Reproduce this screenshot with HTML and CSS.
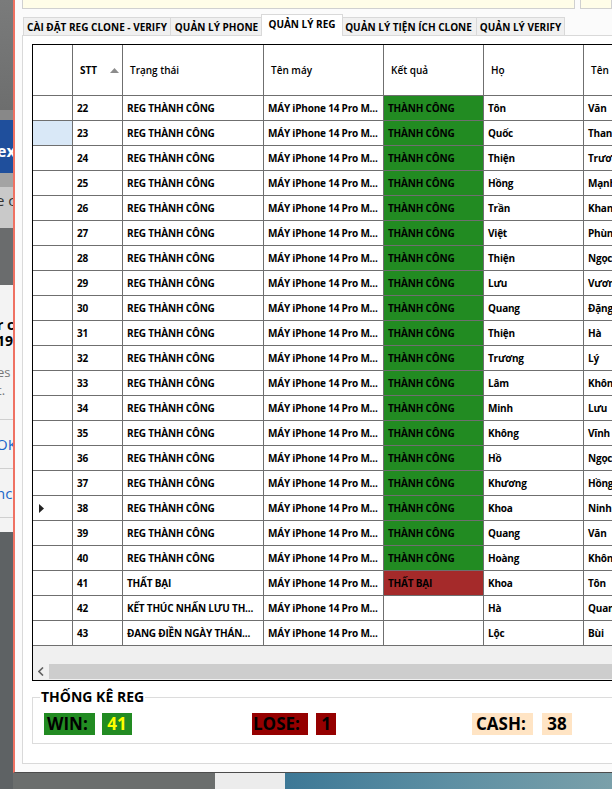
FILE: index.html
```html
<!DOCTYPE html>
<html lang="vi">
<head>
  <meta charset="UTF-8" />
  <title>Quản lý Reg</title>
  <link rel="stylesheet" href="styles.css">
</head>
<body>
<div class="screen">
  <!-- window behind, only its right edge shows -->
  <div class="behind">
    <div class="bh-top"></div>
    <div class="bh-sep"></div>
    <div class="bh-blue">ex</div>
    <div class="bh-mid"></div>
    <div class="bh-light">e c</div>
    <div class="bh-dark"></div>
    <div class="bh-dialog">
      <div class="dlg-title">r c</div>
      <div class="dlg-title">19</div>
      <div class="dlg-text">es</div>
      <div class="dlg-text last">t.</div>
      <div class="dlg-btn">OK</div>
      <div class="dlg-btn">nc</div>
    </div>
    <div class="bh-rest"></div>
  </div>

  <div class="main">
    <div class="window">
      <div class="inputs">
        <div class="input wide"></div>
        <div class="input"></div>
      </div>

      <div class="tabs">
        <div class="tab t1">CÀI ĐẶT REG CLONE - VERIFY</div>
        <div class="tab t2">QUẢN LÝ PHONE</div>
        <div class="tab t3 active">QUẢN LÝ REG</div>
        <div class="tab t4">QUẢN LÝ TIỆN ÍCH CLONE</div>
        <div class="tab t5">QUẢN LÝ VERIFY</div>
      </div>

      <div class="panel">
        <div class="grid">
          <div class="row head">
            <div class="cell"></div>
            <div class="cell sort"><span>STT</span><svg width="9" height="5" viewBox="0 0 9 5"><path d="M0 5 L4.5 0 L9 5Z" fill="#8c8c8c"/></svg></div>
            <div class="cell">Trạng thái</div>
            <div class="cell">Tên máy</div>
            <div class="cell">Kết quả</div>
            <div class="cell">Họ</div>
            <div class="cell">Tên</div>
          </div>
          <div class="row"><div class="cell rh"></div><div class="cell">22</div><div class="cell">REG THÀNH CÔNG</div><div class="cell">MÁY iPhone 14 Pro M...</div><div class="cell ok">THÀNH CÔNG</div><div class="cell">Tôn</div><div class="cell">Văn</div></div>
          <div class="row"><div class="cell rh sel"></div><div class="cell">23</div><div class="cell">REG THÀNH CÔNG</div><div class="cell">MÁY iPhone 14 Pro M...</div><div class="cell ok">THÀNH CÔNG</div><div class="cell">Quốc</div><div class="cell">Thanh</div></div>
          <div class="row"><div class="cell rh"></div><div class="cell">24</div><div class="cell">REG THÀNH CÔNG</div><div class="cell">MÁY iPhone 14 Pro M...</div><div class="cell ok">THÀNH CÔNG</div><div class="cell">Thiện</div><div class="cell">Trương</div></div>
          <div class="row"><div class="cell rh"></div><div class="cell">25</div><div class="cell">REG THÀNH CÔNG</div><div class="cell">MÁY iPhone 14 Pro M...</div><div class="cell ok">THÀNH CÔNG</div><div class="cell">Hồng</div><div class="cell">Mạnh</div></div>
          <div class="row"><div class="cell rh"></div><div class="cell">26</div><div class="cell">REG THÀNH CÔNG</div><div class="cell">MÁY iPhone 14 Pro M...</div><div class="cell ok">THÀNH CÔNG</div><div class="cell">Trần</div><div class="cell">Khang</div></div>
          <div class="row"><div class="cell rh"></div><div class="cell">27</div><div class="cell">REG THÀNH CÔNG</div><div class="cell">MÁY iPhone 14 Pro M...</div><div class="cell ok">THÀNH CÔNG</div><div class="cell">Việt</div><div class="cell">Phùng</div></div>
          <div class="row"><div class="cell rh"></div><div class="cell">28</div><div class="cell">REG THÀNH CÔNG</div><div class="cell">MÁY iPhone 14 Pro M...</div><div class="cell ok">THÀNH CÔNG</div><div class="cell">Thiện</div><div class="cell">Ngọc</div></div>
          <div class="row"><div class="cell rh"></div><div class="cell">29</div><div class="cell">REG THÀNH CÔNG</div><div class="cell">MÁY iPhone 14 Pro M...</div><div class="cell ok">THÀNH CÔNG</div><div class="cell">Lưu</div><div class="cell">Vương</div></div>
          <div class="row"><div class="cell rh"></div><div class="cell">30</div><div class="cell">REG THÀNH CÔNG</div><div class="cell">MÁY iPhone 14 Pro M...</div><div class="cell ok">THÀNH CÔNG</div><div class="cell">Quang</div><div class="cell">Đặng</div></div>
          <div class="row"><div class="cell rh"></div><div class="cell">31</div><div class="cell">REG THÀNH CÔNG</div><div class="cell">MÁY iPhone 14 Pro M...</div><div class="cell ok">THÀNH CÔNG</div><div class="cell">Thiện</div><div class="cell">Hà</div></div>
          <div class="row"><div class="cell rh"></div><div class="cell">32</div><div class="cell">REG THÀNH CÔNG</div><div class="cell">MÁY iPhone 14 Pro M...</div><div class="cell ok">THÀNH CÔNG</div><div class="cell">Trương</div><div class="cell">Lý</div></div>
          <div class="row"><div class="cell rh"></div><div class="cell">33</div><div class="cell">REG THÀNH CÔNG</div><div class="cell">MÁY iPhone 14 Pro M...</div><div class="cell ok">THÀNH CÔNG</div><div class="cell">Lâm</div><div class="cell">Không</div></div>
          <div class="row"><div class="cell rh"></div><div class="cell">34</div><div class="cell">REG THÀNH CÔNG</div><div class="cell">MÁY iPhone 14 Pro M...</div><div class="cell ok">THÀNH CÔNG</div><div class="cell">Minh</div><div class="cell">Lưu</div></div>
          <div class="row"><div class="cell rh"></div><div class="cell">35</div><div class="cell">REG THÀNH CÔNG</div><div class="cell">MÁY iPhone 14 Pro M...</div><div class="cell ok">THÀNH CÔNG</div><div class="cell">Không</div><div class="cell">Vĩnh</div></div>
          <div class="row"><div class="cell rh"></div><div class="cell">36</div><div class="cell">REG THÀNH CÔNG</div><div class="cell">MÁY iPhone 14 Pro M...</div><div class="cell ok">THÀNH CÔNG</div><div class="cell">Hồ</div><div class="cell">Ngọc</div></div>
          <div class="row"><div class="cell rh"></div><div class="cell">37</div><div class="cell">REG THÀNH CÔNG</div><div class="cell">MÁY iPhone 14 Pro M...</div><div class="cell ok">THÀNH CÔNG</div><div class="cell">Khương</div><div class="cell">Hồng</div></div>
          <div class="row"><div class="cell rh cur"><svg width="5" height="9" viewBox="0 0 5 9"><path d="M0 0 L5 4.5 L0 9Z" fill="#222"/></svg></div><div class="cell">38</div><div class="cell">REG THÀNH CÔNG</div><div class="cell">MÁY iPhone 14 Pro M...</div><div class="cell ok">THÀNH CÔNG</div><div class="cell">Khoa</div><div class="cell">Ninh</div></div>
          <div class="row"><div class="cell rh"></div><div class="cell">39</div><div class="cell">REG THÀNH CÔNG</div><div class="cell">MÁY iPhone 14 Pro M...</div><div class="cell ok">THÀNH CÔNG</div><div class="cell">Quang</div><div class="cell">Văn</div></div>
          <div class="row"><div class="cell rh"></div><div class="cell">40</div><div class="cell">REG THÀNH CÔNG</div><div class="cell">MÁY iPhone 14 Pro M...</div><div class="cell ok">THÀNH CÔNG</div><div class="cell">Hoàng</div><div class="cell">Không</div></div>
          <div class="row"><div class="cell rh"></div><div class="cell">41</div><div class="cell">THẤT BẠI</div><div class="cell">MÁY iPhone 14 Pro M...</div><div class="cell fail">THẤT BẠI</div><div class="cell">Khoa</div><div class="cell">Tôn</div></div>
          <div class="row"><div class="cell rh"></div><div class="cell">42</div><div class="cell">KẾT THÚC NHẤN LƯU TH...</div><div class="cell">MÁY iPhone 14 Pro M...</div><div class="cell"></div><div class="cell">Hà</div><div class="cell">Quang</div></div>
          <div class="row"><div class="cell rh"></div><div class="cell">43</div><div class="cell">ĐANG ĐIỀN NGÀY THÁN...</div><div class="cell">MÁY iPhone 14 Pro M...</div><div class="cell"></div><div class="cell">Lộc</div><div class="cell">Bùi</div></div>
          <div class="grid-empty"></div>
          <div class="hscroll">
            <div class="sb-btn"><svg width="6" height="9" viewBox="0 0 6 9"><path d="M5 0.5 L1 4.5 L5 8.5" fill="none" stroke="#606060" stroke-width="1.6"/></svg></div>
            <div class="sb-thumb"></div>
          </div>
        </div>

        <fieldset class="stats">
          <legend>THỐNG KÊ REG</legend>
          <div class="stat win">WIN:</div>
          <div class="stat win-val">41</div>
          <div class="stat lose">LOSE:</div>
          <div class="stat lose-val">1</div>
          <div class="stat cash">CASH:</div>
          <div class="stat cash-val">38</div>
        </fieldset>
      </div>
    </div>

    <div class="wallpaper">
      <div class="wp-gray"></div>
      <div class="wp-light"></div>
      <div class="wp-blue"></div>
    </div>
  </div>
</div>
</body>
</html>
```

FILE: styles.css
```css
body {
  margin: 0;
  font-family: "Open Sans", "Noto Sans", sans-serif;
  color: #000;
}
.screen {
  display: flex;
  width: 612px;
  height: 789px;
  overflow: hidden;
}

/* window behind */
.behind {
  width: 13px;
  flex-shrink: 0;
  display: flex;
  flex-direction: column;
  overflow: hidden;
  background: #5e6264;
  white-space: nowrap;
}
.bh-top {
  height: 110px;
  background: linear-gradient(#7a7b7b, #6d6e6e);
}
.bh-sep {
  height: 10px;
  background: #888;
}
.bh-blue {
  height: 53px;
  background: #1f4f9c;
  color: #fff;
  font-size: 16px;
  font-weight: 700;
  line-height: 62px;
  text-indent: -3px;
}
.bh-mid {
  height: 14px;
  background: #a3a3a3;
}
.bh-light {
  height: 41px;
  background: #c9c9c9;
  color: #333;
  font-size: 15px;
  line-height: 26px;
  text-indent: -4px;
}
.bh-dark {
  height: 57px;
  background: #6a6c6d;
}
.bh-dialog {
  height: 247px;
  background: #f3f3f3;
  padding-top: 32px;
  box-sizing: border-box;
}
.dlg-title {
  font-size: 14px;
  font-weight: 700;
  line-height: 16px;
  text-indent: -3px;
}
.dlg-text {
  font-size: 13px;
  line-height: 18px;
  color: #777;
  text-indent: -3px;
}
.dlg-title + .dlg-text {
  margin-top: 14px;
}
.dlg-text.last {
  padding-bottom: 20px;
  border-bottom: 1px solid #cfcfcf;
}
.dlg-btn {
  color: #1a66c9;
  font-size: 15px;
  line-height: 48px;
  text-indent: -4px;
  border-bottom: 1px solid #cfcfcf;
}
.bh-rest {
  flex: 1;
}

/* main window */
.main {
  flex: 1;
  min-width: 0;
  display: flex;
  flex-direction: column;
  overflow: hidden;
}
.window {
  height: 773px;
  box-sizing: border-box;
  border-left: 2px solid #ef7263;
  border-bottom: 1px solid #4c4c4c;
  background: #fbfbfb;
  padding-left: 7px;
  flex-shrink: 0;
}
.inputs {
  display: flex;
  gap: 5px;
  height: 9px;
}
.input {
  width: 640px;
  height: 9px;
  box-sizing: border-box;
  border: 1px solid #d0d0d0;
  border-top: none;
  background: #fffde8;
}
.input.wide {
  width: 553px;
  flex-shrink: 0;
}

.tabs {
  display: flex;
  align-items: flex-end;
  height: 21px;
  margin-top: 5px;
  padding-left: 1px;
}
.tab {
  height: 18px;
  box-sizing: border-box;
  border: 1px solid #d9d9d9;
  border-bottom: none;
  background: #f0f0f0;
  font-size: 10px;
  font-weight: 700;
  line-height: 18px;
  text-align: center;
  white-space: nowrap;
  flex-shrink: 0;
}
.t1 { width: 148px; }
.t2 { width: 92px; border-left: none; }
.t3 { width: 82px; }
.t4 { width: 136px; border-left: none; }
.t5 { width: 88px; border-left: none; }
.tab.active {
  height: 22px;
  margin: 0 -2px -1px;
  background: #fff;
  position: relative;
  z-index: 1;
  line-height: 19px;
}

.panel {
  width: 640px;
  height: 729px;
  box-sizing: border-box;
  border: 1px solid #d9d9d9;
  background: #fff;
  padding: 8px 0 0 9px;
}

/* data grid */
.grid {
  width: 640px;
  border: 1px solid #000;
  border-right: none;
  background: #f0f0f0;
  overflow: hidden;
}
.row {
  display: grid;
  grid-template-columns: 40px 50px 141px 120px 100px 100px 100px;
  height: 25px;
  background: #fff;
}
.cell {
  box-sizing: border-box;
  border-right: 1px solid #6f6f6f;
  border-bottom: 1px solid #6f6f6f;
  padding-left: 4px;
  font-size: 10px;
  font-weight: 700;
  letter-spacing: -0.2px;
  line-height: 24px;
  white-space: nowrap;
  overflow: hidden;
}
.row.head {
  height: 51px;
}
.head .cell {
  padding-left: 7px;
  font-weight: 600;
  letter-spacing: 0;
  line-height: 50px;
}
.head .sort {
  display: flex;
  align-items: center;
  justify-content: space-between;
  padding-right: 3px;
  font-weight: 700;
}
.rh.sel {
  background: #d9e8f7;
}
.rh.cur {
  display: flex;
  align-items: center;
  padding-left: 6px;
}
.cell.ok {
  background: #228b22;
}
.cell.fail {
  background: #a52a2a;
}
.grid-empty {
  height: 17px;
}
.hscroll {
  display: flex;
  height: 17px;
}
.sb-btn {
  width: 16px;
  display: flex;
  align-items: center;
  justify-content: center;
}
.sb-thumb {
  flex: 1;
  background: #cdcdcd;
  margin: 1px 0;
}

/* stats group box */
.stats {
  width: 640px;
  box-sizing: border-box;
  margin: 7px 0 0;
  border: 1px solid #dcdcdc;
  padding: 7px 0 8px 11px;
  display: flex;
  align-items: center;
}
.stats legend {
  margin-left: -4px;
  padding: 0 1px;
  font-size: 14px;
  font-weight: 700;
  line-height: 18px;
}
.stat {
  height: 22px;
  box-sizing: border-box;
  font-size: 17px;
  font-weight: 700;
  line-height: 22px;
  white-space: nowrap;
}
.win {
  width: 51px;
  padding-left: 3px;
  background: #228b22;
}
.win-val {
  width: 30px;
  margin-left: 7px;
  text-align: center;
  background: #228b22;
  color: #ffff00;
}
.lose {
  width: 56px;
  margin-left: 120px;
  padding-left: 1px;
  background: #950000;
}
.lose-val {
  width: 20px;
  margin-left: 8px;
  text-align: center;
  background: #950000;
}
.cash {
  width: 61px;
  margin-left: 136px;
  padding-left: 4px;
  background: #ffe4c4;
}
.cash-val {
  width: 30px;
  margin-left: 9px;
  text-align: center;
  background: #ffe4c4;
}

/* desktop under the window */
.wallpaper {
  flex: 1;
  display: flex;
}
.wp-gray {
  width: 202px;
  background: #6b6e6d;
}
.wp-light {
  width: 70px;
  background: #ececec;
}
.wp-blue {
  flex: 1;
  background: linear-gradient(90deg, #3d7896, #5d8fa3 50%, #7aa0aa);
}
```
